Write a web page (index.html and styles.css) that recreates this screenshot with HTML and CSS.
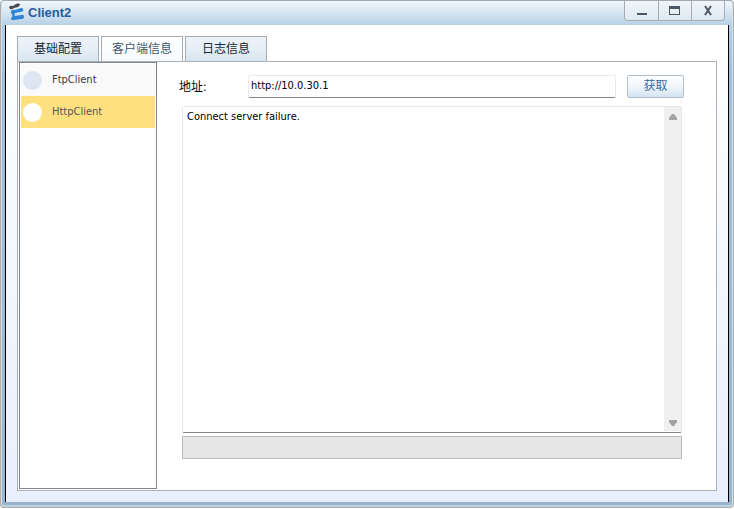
FILE: index.html
```html
<!DOCTYPE html>
<html lang="zh-CN">
<head>
<meta charset="utf-8">
<title>Client2</title>
<link rel="stylesheet" href="styles.css">
</head>
<body>
<div class="window">
  <header class="titlebar">
    <svg class="logo" width="16" height="18" viewBox="0 0 16 18" aria-hidden="true">
      <path d="M0 4Q2 2 4 3L7 1Q9 0 11 1Q11 3 9 4L5 5Q3 7 1 6Z" fill="#4a4b4d"/>
      <path d="M2 8Q4 6 6 7L12 5Q15 5 14 8Q13 9 11 9L6 10Q5 12 6 13L12 12Q15 11 15 14Q15 16 12 16L5 17Q2 18 2 15Q4 14 3 11Q1 10 2 8Z" fill="#2f83d5"/>
    </svg>
    <h1 class="title">Client2</h1>
    <div class="controls">
      <button class="control" type="button" aria-label="最小化"><svg width="12" height="12" viewBox="0 0 12 12"><rect x="1" y="9" width="10" height="2" fill="#4d5763"/></svg></button>
      <button class="control" type="button" aria-label="最大化"><svg width="12" height="12" viewBox="0 0 12 12"><path d="M0 2H11V11H0Z M1 5V10H10V5Z" fill="#4d5763" fill-rule="evenodd"/></svg></button>
      <button class="control" type="button" aria-label="关闭"><svg width="12" height="12" viewBox="0 0 12 12"><path d="M3 2L9 11M9 2L3 11" stroke="#4d5763" stroke-width="2"/></svg></button>
    </div>
  </header>
  <main class="client">
    <nav class="tabs" role="tablist">
      <button class="tab" type="button" role="tab">基础配置</button>
      <button class="tab tab-active" type="button" role="tab" aria-selected="true">客户端信息</button>
      <button class="tab" type="button" role="tab">日志信息</button>
    </nav>
    <section class="panel">
      <div class="sidebar">
        <button class="entry" type="button"><span class="dot"></span>FtpClient</button>
        <button class="entry entry-active" type="button"><span class="dot"></span>HttpClient</button>
      </div>
      <form class="content">
        <div class="address">
          <label class="label" for="address">地址:</label>
          <input class="field" id="address" type="text" value="http://10.0.30.1">
          <button class="fetch" type="button">获取</button>
        </div>
        <div class="output">
          <textarea class="text" aria-label="Output" readonly>Connect server failure.</textarea>
          <div class="scroll">
            <svg width="10" height="6" viewBox="0 0 10 6"><path d="M4 0H6L9 4V6H1V4Z" fill="#a3a3a3"/></svg>
            <svg width="10" height="6" viewBox="0 0 10 6"><path d="M1 0H9V2L6 6H4L1 2Z" fill="#a3a3a3"/></svg>
          </div>
        </div>
        <div class="progress"></div>
      </form>
    </section>
  </main>
</div>
</body>
</html>
```
FILE: styles.css
```css
* {
  box-sizing: border-box;
}

body {
  margin: 0;
  background: #fff;
  font: 11px/16px "DejaVu Sans Condensed", "Noto Sans CJK SC", sans-serif;
  color: #000;
}

button,
input,
textarea {
  margin: 0;
  font: inherit;
}

.window {
  display: flex;
  flex-direction: column;
  height: calc(100vh - 1px);
  padding: 0 4px 5px;
  border: 1px solid #adadad;
  border-top-color: #a2a9b0;
  border-radius: 4px;
  background: linear-gradient(#f0f6fc 0, #d6e5f2 12px, #b4cfe6 25px, #a2bfd9 70px, #98b4cc);
  box-shadow: inset 1px 0 #d5e2ec, inset -1px 0 #d5e2ec, inset 0 -2px #bdd2e0;
}

.titlebar {
  display: flex;
  align-items: flex-start;
  height: 24px;
  padding: 0 4px;
}

.logo {
  margin-top: 2px;
}

.title {
  flex: 1;
  margin: 3px 0 0 3px;
  font: bold 13px/18px "Liberation Sans", sans-serif;
  color: #2a5d9c;
}

.controls {
  display: flex;
  height: 20px;
  border: solid #a5abb2;
  border-width: 0 1px 1px;
  border-radius: 0 0 4px 4px;
  background: linear-gradient(#f1f5f9, #dfe9f3);
}

.control {
  display: grid;
  place-items: center;
  width: 33px;
  padding: 0 0 1px;
  border: 0;
  background: none;
}

.control + .control {
  border-left: 1px solid #a5abb2;
}

.client {
  display: flex;
  flex: 1;
  flex-direction: column;
  padding: 11px;
  border: solid #000;
  border-width: 0 1px;
  background: linear-gradient(#fff, #e9effe);
}

.tabs {
  display: flex;
  gap: 2px;
}

.tab {
  width: 82px;
  height: 25px;
  padding: 0;
  border: 1px solid #a6acb3;
  border-bottom: 0;
  background: linear-gradient(#eef3f8, #e6eef6 50%, #d8e5ef);
  color: #202833;
  font-size: 12px;
}

.tab-active {
  background: linear-gradient(#fff, #f7fbfe);
  color: #40566d;
}

.panel {
  display: flex;
  flex: 1;
  padding: 0 34px 1px 1px;
  border: 1px solid #adb0b5;
  background: #fff;
}

.sidebar {
  width: 138px;
  padding: 1px;
  border: 1px solid #82868f;
}

.entry {
  display: flex;
  align-items: center;
  gap: 10px;
  width: 100%;
  height: 32px;
  padding: 0 2px;
  border: 0;
  background: #fafafa;
  color: #333b44;
}

.entry-active {
  background: #ffe07e;
  color: #55585c;
}

.dot {
  width: 19px;
  height: 19px;
  border-radius: 50%;
  background: #dce7f2;
}

.entry-active .dot {
  background: #fff;
}

.content {
  display: flex;
  flex: 1;
  flex-direction: column;
  padding: 13px 0 30px 22px;
}

.address {
  display: flex;
  align-items: center;
  height: 23px;
}

.label {
  width: 69px;
  font-size: 12px;
}

.field {
  flex: 1;
  min-width: 0;
  height: 23px;
  padding: 0 2px 2px;
  border: 1px solid #e9e9e9;
  border-bottom-color: #868686;
  border-radius: 2px;
}

.fetch {
  width: 57px;
  height: 23px;
  margin: 0 -2px 0 11px;
  padding: 0 0 2px;
  border: 1px solid #b5c0cd;
  border-radius: 2px;
  background: linear-gradient(#fff, #f1f6fb 50%, #d3e3f1);
  color: #2f6da8;
  font-size: 12px;
}

.output {
  display: flex;
  flex: 1;
  margin: 8px 0 3px 3px;
  border: 1px solid #e9e9e9;
  border-bottom-color: #868686;
  border-radius: 2px;
}

.text {
  flex: 1;
  padding: 2px 4px;
  border: 0;
  outline: 0;
  background: none;
  resize: none;
}

.scroll {
  display: flex;
  flex-direction: column;
  align-items: center;
  justify-content: space-between;
  width: 17px;
  margin-bottom: 1px;
  padding: 7px 0 5px;
  background: #f0f0f0;
}

.progress {
  height: 23px;
  margin-left: 3px;
  border: 1px solid #bcbcbc;
  background: #e6e6e6;
}
```
